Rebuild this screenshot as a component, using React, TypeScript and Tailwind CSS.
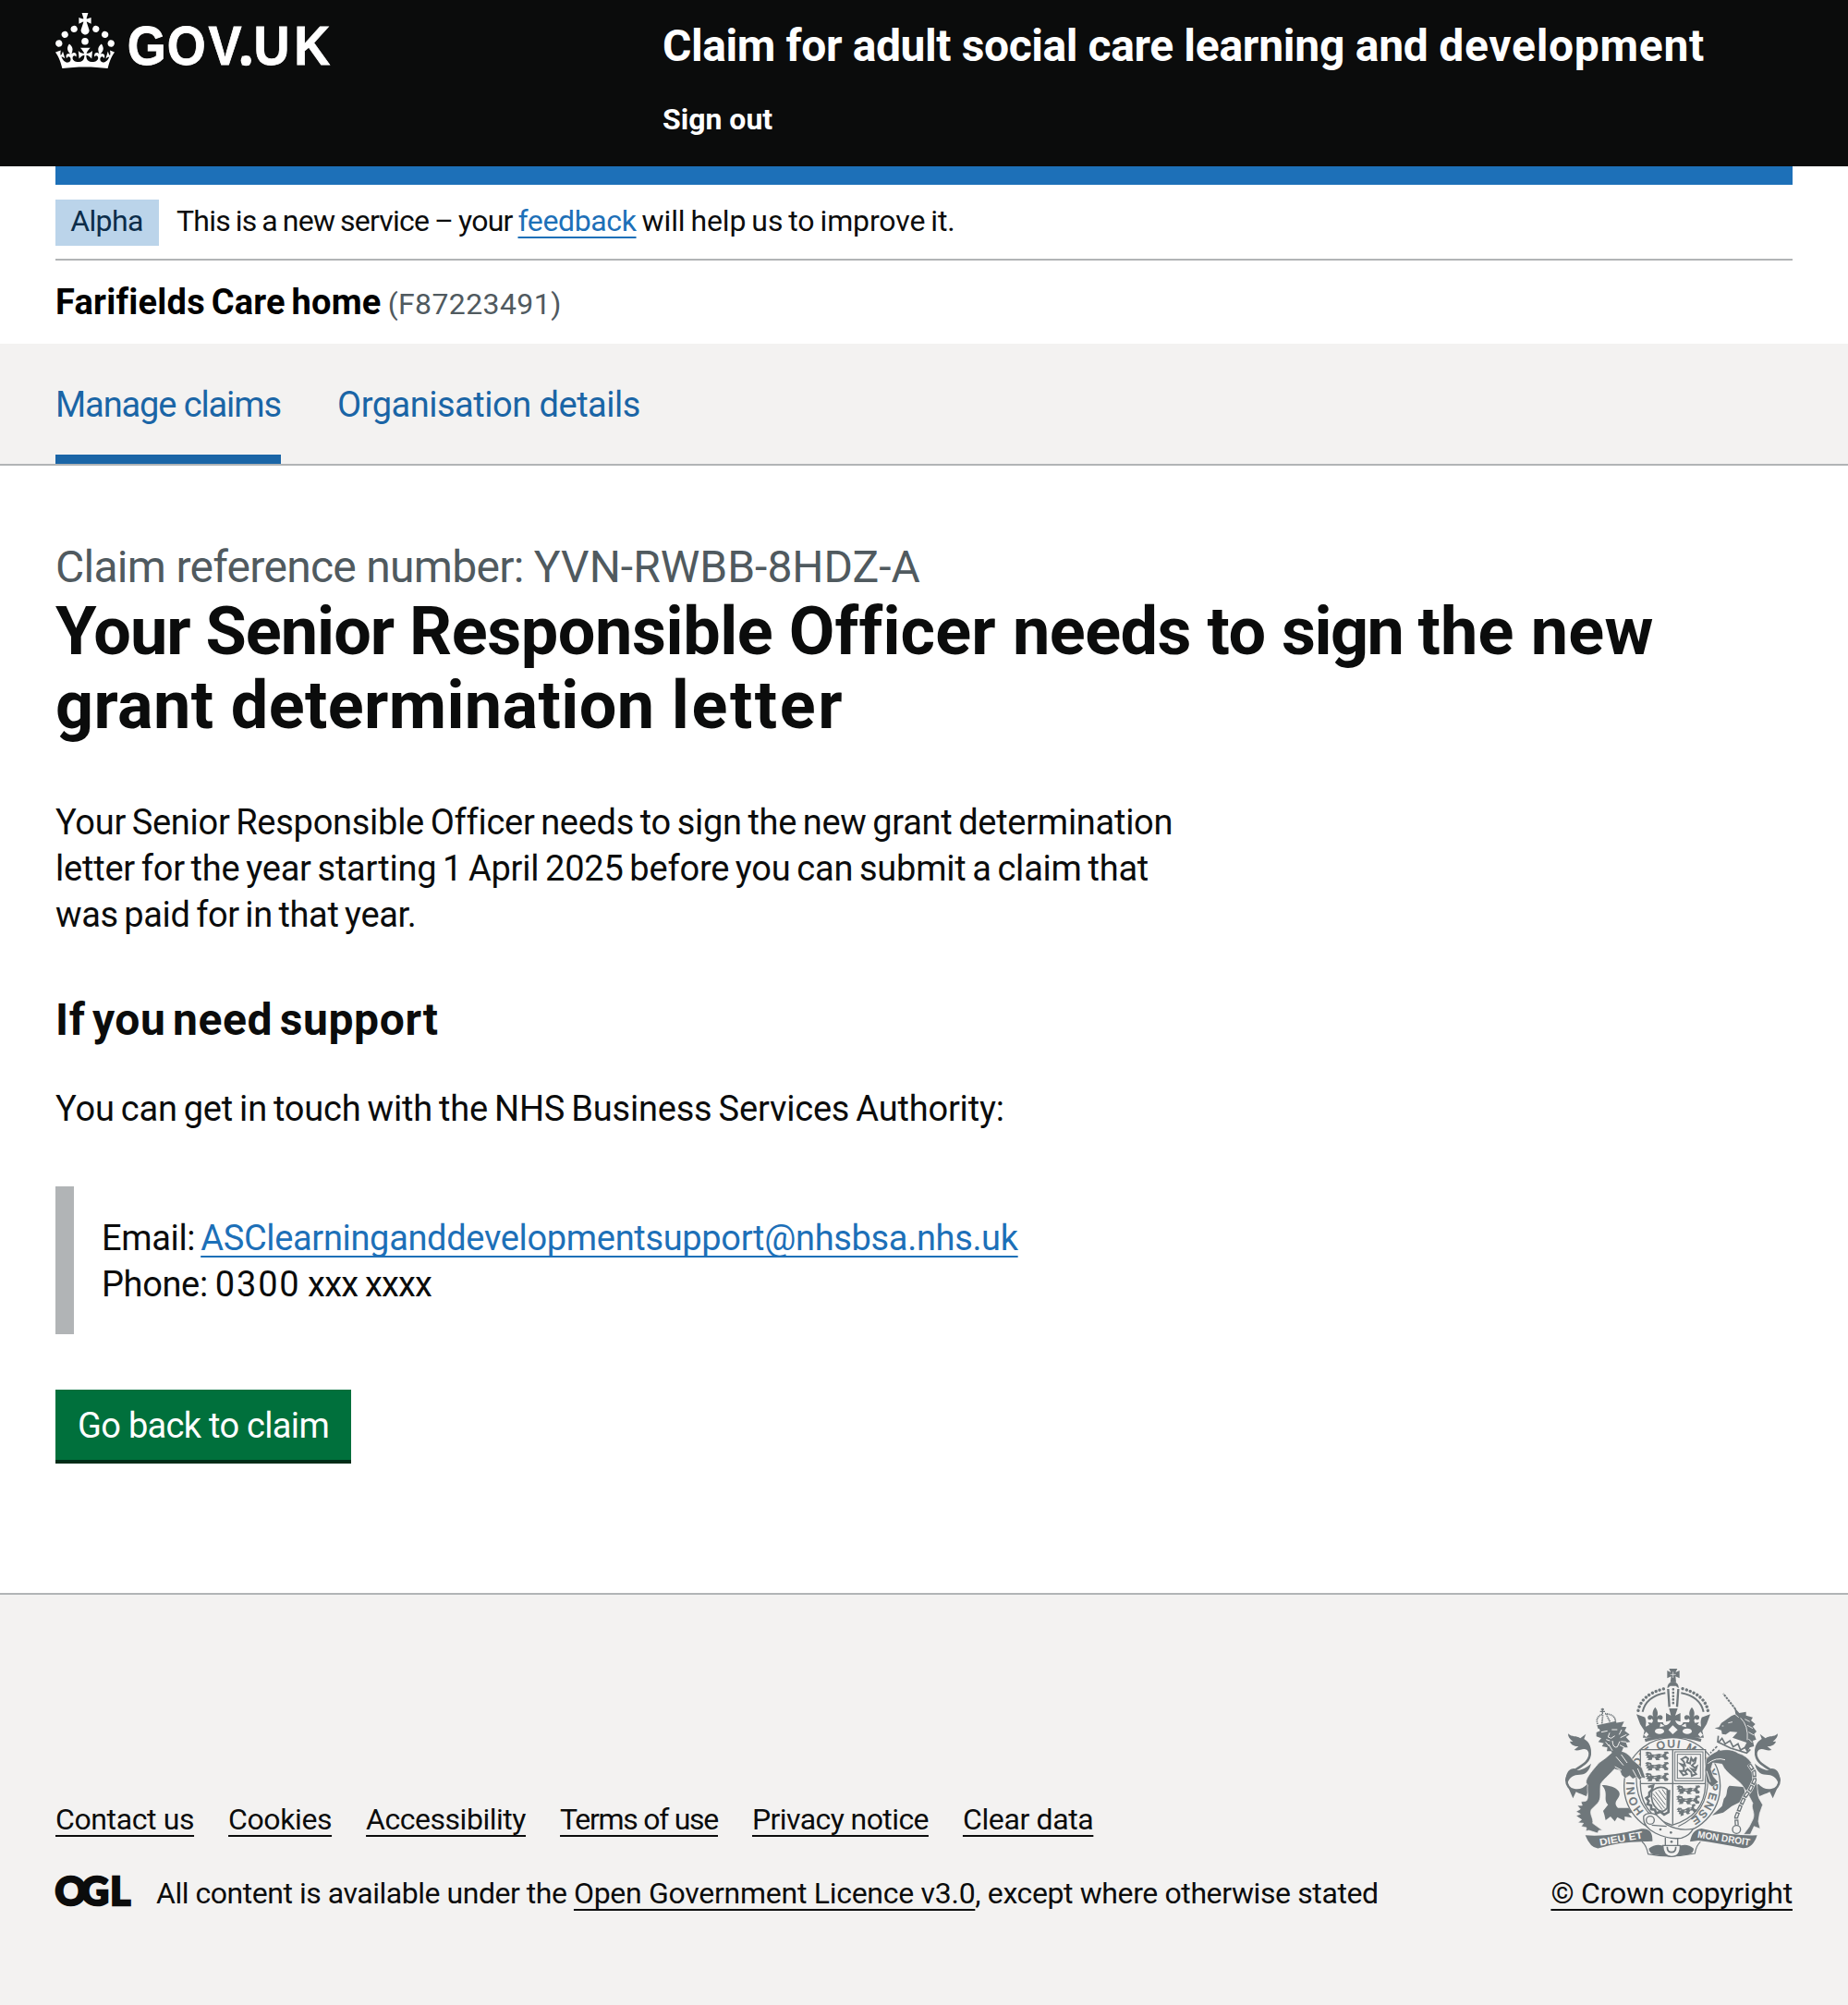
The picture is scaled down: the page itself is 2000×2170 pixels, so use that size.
import type { ReactNode } from 'react';

const CREST = '#6f777b';
const PAPER = '#f3f2f1';

function Crown() {
  return (
    <svg viewBox="0 0 32 30" className="h-[60px] w-16 shrink-0" fill="currentColor" aria-hidden="true">
      <path d="M22.6 10.4c-1 .4-2-.1-2.4-1-.4-.9.1-2 1-2.4.9-.4 2 .1 2.4 1s-.1 2-1 2.4m4.9 3c-1 .4-2-.1-2.4-1-.4-.9.1-2 1-2.4.9-.4 2 .1 2.4 1s0 2-1 2.4m3.3 4.8c-1 .4-2-.1-2.4-1-.4-.9.1-2 1-2.4.9-.4 2 .1 2.4 1s-.1 2-1 2.4M17 4.7l2.3 1.2V2.5l-2.3.7-.2-.2.9-3h-3.4l.9 3-.2.2c-.1.1-2.3-.7-2.3-.7v3.4L15 4.7c.1.1.1.2.2.2l-1.3 4c-.1.2-.1.4-.1.6 0 1.1.8 2 1.9 2.2h.7c1-.2 1.9-1.1 1.9-2.1 0-.2 0-.4-.1-.6l-1.3-4c-.1-.2 0-.2.1-.3m-7.6 5.7c.9.4 2-.1 2.4-1 .4-.9-.1-2-1-2.4-.9-.4-2 .1-2.4 1s0 2 1 2.4m-5 3c.9.4 2-.1 2.4-1 .4-.9-.1-2-1-2.4-.9-.4-2 .1-2.4 1s.1 2 1 2.4m-3.2 4.8c.9.4 2-.1 2.4-1 .4-.9-.1-2-1-2.4-.9-.4-2 .1-2.4 1s0 2 1 2.4m14.8 11c4.4 0 8.6.3 12.3.8 1.1-4.5 2.4-7 3.7-8.8l-2.5-.9c.2 1.3.3 1.9 0 2.7-.4-.4-.8-1.1-1.1-2.3l-1.2 4c.7-.5 1.3-.8 2-.9-1.1 2.5-2.6 3.1-3.5 3-1.1-.2-1.7-1.2-1.5-2.1.3-1.2 1.5-1.5 2.1-.1 1.1-2.3-.8-3-2-2.3 1.9-1.9 2.1-3.5.6-5.6-2.1 1.6-2.1 3.2-1.2 5.5-1.2-1.4-3.2-.6-2.5 1.6.9-1.4 2.1-.5 1.9.8-.2 1.1-1.7 2.1-3.5 1.9-2.7-.2-2.9-2.1-2.9-3.6.7-.1 1.9.5 2.9 1.9l.4-4.3c-1.1 1.1-2.1 1.4-3.2 1.4.4-1.2 2.1-3 2.1-3h-5.4s1.7 1.9 2.1 3c-1.1 0-2.1-.2-3.2-1.4l.4 4.3c1-1.4 2.2-2 2.9-1.9-.1 1.5-.2 3.4-2.9 3.6-1.9.2-3.4-.8-3.5-1.9-.2-1.3 1-2.2 1.9-.8.7-2.3-1.2-3-2.5-1.6.9-2.2.9-3.9-1.2-5.5-1.5 2-1.3 3.7.6 5.6-1.2-.7-3.1 0-2 2.3.6-1.4 1.8-1.1 2.1.1.2.9-.3 1.9-1.5 2.1-.9.2-2.4-.5-3.5-3 .6 0 1.2.3 2 .9l-1.2-4c-.3 1.1-.7 1.9-1.1 2.3-.3-.8-.2-1.4 0-2.7l-2.9.9C1.3 23 2.6 25.5 3.7 30c3.7-.5 7.9-.8 12.3-.8" />
      <circle cx="16" cy="15.4" r="1.9" />
    </svg>
  );
}

function Wordmark() {
  return (
    <svg viewBox="-4 -4 232 76" className="-mt-1 ml-[10px] h-[76px] w-[232px]" fill="currentColor" role="img" aria-label="GOV.UK">
      <text
        transform="scale(0.9 1)"
        x="-0.3 47.4 97.2 133.8 151.6 200.2"
        y="55.7"
        fontFamily="Liberation Sans"
        fontWeight="700"
        fontSize="60"
        stroke="currentColor"
        strokeWidth="0.8"
      >
        GOV.UK
      </text>
      <circle cx="128.3" cy="51.6" r="5.7" />
    </svg>
  );
}

/* One walking lion of the English quarterings. */
function Passant({ x, y }: { x: number; y: number }) {
  return (
    <g transform={`translate(${x} ${y})`}>
      <path d="M2 4L10 0L22 3L24 9L34 10L48 7L60 10L66 4L62 1L76 0L80 6L72 8L70 14L78 20L76 26L66 27L62 20L54 18L46 24L52 28L38 28L34 20L26 20L24 27L10 28L14 22L6 20L10 14L2 12L8 8Z" />
      <path d="M12 9h7M30 15h9M52 13h7" stroke={PAPER} strokeWidth="2.5" />
    </g>
  );
}

function Fleur({ x, y }: { x: number; y: number }) {
  return (
    <path
      transform={`translate(${x} ${y})`}
      d="M0 -29C10 -16 10 -6 5 4C12 -8 27 -4 24 7C22 13 14 13 11 8L7 14L10 22L24 20L20 34H-20L-24 20L-10 22L-7 14L-11 8C-14 13 -22 13 -24 7C-27 -4 -12 -8 -5 4C-10 -6 -10 -16 0 -29Z"
    />
  );
}

function Tail() {
  return (
    <>
      <path d="M178 455C150 485 107 475 107 440C110 402 184 400 183 352C182 334 172 324 158 320" fill="none" stroke={CREST} strokeWidth="8" />
      <path d="M112 289C126 302 138 294 152 304L170 290L164 306C182 316 190 336 186 360L174 342C160 332 150 348 132 342L146 330C128 330 120 322 118 314L128 315C117 306 112 300 112 289Z" />
      <path d="M104 440C106 412 118 400 136 402L130 408C152 410 168 402 187 386C182 408 170 422 150 422C130 422 116 432 111 448Z" />
      <path d="M112 462L128 499L138 478C150 484 162 488 172 492L182 456C160 474 134 478 112 462Z" />
    </>
  );
}

function RoyalArms() {
  return (
    <svg viewBox="100 75 702 618" className="h-[206px] w-[234px]" fill={CREST} aria-hidden="true">
      {/* garter */}
      <circle cx="450" cy="458" r="156" fill={PAPER} stroke={CREST} strokeWidth="4" />
      <path id="garter" d="M358 541A124 124 0 1 1 500 571" fill="none" />
      <text fontFamily="Liberation Sans" fontSize="35" stroke={CREST} strokeWidth="1.8">
        <textPath href="#garter" textLength="612">HONI SOIT QUI MAL Y PENSE</textPath>
      </text>
      <path d="M334 420Q328 545 440 590M566 420Q572 545 470 590" fill="none" stroke={CREST} strokeWidth="3.5" />

      {/* shield */}
      <path d="M347 341H558V455Q555 555 450 586Q350 555 347 455Z" fill={PAPER} stroke={CREST} strokeWidth="4" />
      <path d="M452 341V584M347 451H558" stroke={CREST} strokeWidth="4" />
      <Passant x={360} y={347} />
      <Passant x={360} y={381} />
      <Passant x={360} y={416} />
      <rect x="459" y="348" width="91" height="94" fill="none" stroke={CREST} strokeWidth="3" />
      <rect x="467" y="356" width="75" height="78" fill="none" stroke={CREST} strokeWidth="3" />
      <path
        d="M480 372L494 364L502 370L498 382L508 386L512 368L518 378L528 366L524 384L514 392L524 400L530 396L526 408L514 404L528 420L514 426L512 414L500 404L492 412L498 420L486 424L476 410L488 410L488 398L478 388L492 392L488 380Z"
        fill="none"
        stroke={CREST}
        strokeWidth="6"
      />
      <path d="M372 462L388 458L384 472L376 480L376 492L366 498L374 508L370 518L382 522L382 534L394 536L398 548L412 542L424 552L438 544L440 472" fill="none" stroke={CREST} strokeWidth="8" />
      <path d="M384 476Q410 454 434 470L434 530Q420 548 404 536Q378 516 384 476Z" fill={PAPER} stroke={CREST} strokeWidth="5" />
      <path d="M388 496l30 40M388 484l38 48M396 478l32 42M406 472l24 32M418 470l12 18" stroke={CREST} strokeWidth="3" />
      <Passant x={462} y={457} />
      <Passant x={461} y={490} />
      <g transform="translate(460 524) rotate(-14 0 0) scale(0.82 1)">
        <Passant x={0} y={8} />
      </g>

      {/* imperial crown */}
      <path d="M440 78H467L461 90L474 84V109L461 103L463 122H444L447 103L434 109V84L446 90Z" />
      <path d="M453 88v20M444 97h18" stroke={PAPER} strokeWidth="2" />
      <path d="M435 142C432 114 474 114 471 142L462 134H444Z" />
      <path d="M340 214Q350 162 424 143M566 214Q556 162 484 143" fill="none" stroke={CREST} strokeWidth="10" strokeLinecap="round" strokeDasharray="0.1 12.6" />
      <path d="M354 218Q366 168 428 157M552 218Q540 168 479 157" fill="none" stroke={CREST} strokeWidth="6" />
      <path d="M437 144L441 202M470 144L466 202" stroke={CREST} strokeWidth="7" />
      <path d="M453.5 145V200" stroke={CREST} strokeWidth="8" strokeLinecap="round" strokeDasharray="0.1 11" />
      <path d="M334 226L362 236L366 250C374 266 382 262 388 252H420C424 268 440 262 446 246L430 250V222L446 230L440 207H468L460 230L477 222V250L460 246C466 262 480 268 486 252H520C528 262 536 266 542 250L546 236L574 226L562 258L548 280L553 302H355L360 280L346 258Z" />
      <Fleur x={395} y={232} />
      <Fleur x={514} y={232} />
      <path d="M366 246l10 14l-12 6zM542 246l-10 14l12 6zM412 256l14 8l-16 4zM494 256l-14 8l16 4z" fill={PAPER} />
      <path d="M452 262L468 277L452 291L438 277Z" fill={PAPER} />
      <ellipse cx="409" cy="281" rx="15" ry="9" fill={PAPER} />
      <ellipse cx="499" cy="281" rx="15" ry="9" fill={PAPER} />
      <path d="M358 293l8 -10l8 9l-8 8zM550 293l-8 -10l-8 9l8 8z" fill={PAPER} />
      <path d="M362 311Q453 284 544 311" fill="none" stroke={CREST} strokeWidth="10" />

      {/* lion */}
      <Tail />
      <path
        d="M255 350C280 342 306 346 322 374L352 400L364 434L352 432L345 441L336 430L322 436L312 426L298 434L286 424L280 408L262 404C246 424 228 436 218 452C214 480 222 500 208 515L188 535C180 550 196 565 192 580L224 603L212 603L208 612L180 603L170 605L172 594L155 590L162 580L144 578L156 568L138 556L152 550L138 542L152 534L142 522L158 522L154 510L170 508C182 500 172 475 176 455C158 445 190 410 212 384Q236 368 255 350Z"
        stroke={PAPER}
        strokeWidth="2"
      />
      <path d="M268 364L292 392M284 356L304 384M322 406L334 428M338 402L350 430M264 396L286 408" fill="none" stroke={PAPER} strokeWidth="3" />
      <path d="M222 456C262 456 290 476 276 496C266 510 262 518 274 530L308 530L322 545L308 548L320 562L296 558L296 572L272 560L264 574L250 558L234 570L230 552L226 540L242 520C224 500 246 484 222 456Z" />
      <path d="M204 285L216 280L212 270L266 254L294 250L286 266L302 268L296 280L312 292L300 300L314 316L300 318L306 334L292 334L286 348L300 352L262 364L252 346L238 346L240 334L222 330L228 320L210 316L220 304L204 298Z" />
      <path d="M220 284L240 280M254 276L272 276M247 286L242 300L252 304L264 296M236 308L248 312M256 312Q258 338 272 332L280 314M286 276L278 292M302 292L282 302M302 316L284 314M296 334L280 326M234 316L246 330M244 324L256 344" fill="none" stroke={PAPER} strokeWidth="3" />
      <path d="M206 262L268 248L270 260L210 274Z" />
      <path d="M208 258Q200 234 224 226M266 248Q264 226 232 224M222 256L225 228M248 250L236 226" fill="none" stroke={CREST} strokeWidth="5" strokeDasharray="4 2" />
      <path d="M219 210h10M224 206v20M216 217h16" stroke={CREST} strokeWidth="4" />

      {/* unicorn */}
      <g transform="translate(905 0) scale(-1 1)">
        <Tail />
      </g>
      <path d="M656 210L616 159" stroke={CREST} strokeWidth="6" strokeDasharray="8 2.5" />
      <path d="M602 268L610 254L622 246L642 232L656 226L652 204L668 222L690 218L690 230L712 236L706 246L720 258L712 266L724 282L716 290L723 308L712 312L716 330L702 334L694 350L684 334L692 318L646 302L662 284L638 282L624 292L612 290L610 278L588 271Z" />
      <path d="M672 238Q698 262 694 310M686 242L702 250M694 262L712 272M698 284L716 294M698 306L710 318M632 254L646 251M612 264h5M652 224L666 236" fill="none" stroke={PAPER} strokeWidth="2.6" />
      <path d="M600 296L598 316L640 336L692 352L704 340M600 318L612 304L622 322L638 312L648 332L664 322L672 342L690 332" fill="none" stroke={CREST} strokeWidth="5" />
      <path
        d="M560 372C590 336 640 334 664 352C704 364 720 396 722 436C730 465 724 490 736 506L744 520L734 548L730 574L736 598L716 590L704 616L682 616L700 592L712 568C722 545 704 530 712 515L700 492L684 466C670 438 625 422 612 388L582 384L576 404L584 428L600 446L580 462L562 446L556 408Z"
        stroke={PAPER}
        strokeWidth="2"
      />
      <path d="M566 386Q592 364 622 374M562 410L574 446" fill="none" stroke={PAPER} strokeWidth="3" />
      <path d="M636 458C622 470 634 486 618 500L612 524L580 554L616 545L644 524L668 512C684 494 692 478 680 462Z" />
      <path d="M596 330L574 352M604 342L584 360" stroke={CREST} strokeWidth="5" strokeDasharray="9 4" />
      <path d="M700 388L716 412L718 440L704 470L686 494L672 524L658 560L660 586" fill="none" stroke={PAPER} strokeWidth="16" />
      <path d="M700 388L716 412L718 440L704 470L686 494L672 524L658 560L660 586" fill="none" stroke={CREST} strokeWidth="13" strokeDasharray="22 3" strokeLinejoin="round" />
      <path d="M700 388L716 412L718 440L704 470L686 494L672 524L658 560L660 586" fill="none" stroke={PAPER} strokeWidth="5" strokeDasharray="13 12" strokeDashoffset="-4" />
      <circle cx="659" cy="600" r="13" fill="none" stroke={CREST} strokeWidth="4" />

      {/* motto ribbon and buckle */}
      <path d="M168 619Q240 626 350 598Q388 594 386 638L352 640Q280 640 212 661Q186 664 168 619Z" />
      <path d="M726 619Q650 622 545 597Q514 600 508 640L535 636Q600 644 680 661Q712 662 726 619Z" />
      <path d="M352 640Q366 650 372 680Q446 694 524 678Q528 652 542 640" fill={PAPER} stroke={CREST} strokeWidth="3.5" />
      <path d="M374 662Q400 642 428 656L430 686L392 682Q376 678 374 662ZM520 662Q498 642 466 656L464 686L504 681Q520 676 520 662Z" />
      <text transform="translate(216 653) rotate(-10)" fontFamily="Liberation Sans" fontWeight="700" fontSize="33" fill={PAPER} textLength="142" lengthAdjust="spacingAndGlyphs">DIEU ET</text>
      <text transform="translate(531 626) rotate(9)" fontFamily="Liberation Sans" fontWeight="700" fontSize="32" fill={PAPER} textLength="172" lengthAdjust="spacingAndGlyphs">MON DROIT</text>
      <path d="M358 556Q370 542 398 552L432 584Q470 606 518 598Q508 620 480 628Q440 634 396 612Q352 590 358 556Z" fill={PAPER} stroke={CREST} strokeWidth="4" />
      <circle cx="379" cy="570" r="13" fill="none" stroke={CREST} strokeWidth="4" />
      <path d="M428 626V652M468 628V652M384 586L432 590" stroke={CREST} strokeWidth="4" />
      <path d="M420 652H476Q478 688 448 688Q420 688 420 652Z" fill={PAPER} stroke={CREST} strokeWidth="4" />
      <path d="M434 656Q434 674 448 674Q462 674 462 656" fill="none" stroke={CREST} strokeWidth="5" />
      <circle cx="412" cy="600" r="4" />
      <circle cx="446" cy="610" r="4" />
      <circle cx="448" cy="640" r="4" />
    </svg>
  );
}

function OglMark() {
  return (
    <svg viewBox="-2 -10 86 58" className="-mt-[10px] -ml-0.5 h-[58px] w-[86px] shrink-0" fill="#0b0c0c" role="img" aria-label="OGL">
      <text y="33.3" fontFamily="Lato" fontWeight="900" fontSize="42" stroke="#0b0c0c" strokeWidth="2.5" x="-0.5 27.5 59.3">
        OGL
      </text>
    </svg>
  );
}

function Link({ children, className }: { children: ReactNode; className: string }) {
  return (
    <a href="#" className={`underline decoration-2 underline-offset-[6px] [text-decoration-skip-ink:none] ${className}`}>
      {children}
    </a>
  );
}

export default function App() {
  return (
    <div className="flex min-h-[2170px] w-[2000px] flex-col bg-white font-[Roboto,sans-serif] text-[38px] leading-[50px] text-[#0b0c0c]">
      <header className="flex h-[180px] bg-[#0b0c0c] px-[60px] text-white">
        <div className="flex w-[657px] items-start pt-[14px]">
          <Crown />
          <Wordmark />
        </div>
        <div className="pt-5 font-bold">
          <div className="text-5xl leading-[60px] whitespace-pre">
            <span className="tracking-[-0.41px]">Claim for adult social care </span>
            <span className="tracking-[-0.25px]">learning and </span>
            <span className="tracking-[0.7px]">development</span>
          </div>
          <a href="#" className="mt-[29px] block text-[32px] leading-10">Sign out</a>
        </div>
      </header>

      <div className="mx-[60px] border-t-[20px] border-[#1d70b8]">
        <div className="flex h-[82px] border-b-2 border-[#b1b4b6] pt-4 text-[32px] leading-[46px]">
          <strong className="h-[50px] w-28 bg-[#bbd4ea] pr-px text-center font-normal tracking-[-0.6px] text-[#0c2d4a]">Alpha</strong>
          <p className="ml-[19px] whitespace-pre">
            <span className="tracking-[-0.78px] [word-spacing:-1.3px]">This is a new service – your </span>
            <Link className="tracking-[-0.38px] text-[#1d70b8]">feedback</Link>
            <span className="tracking-[-0.12px] [word-spacing:-1.8px]"> will help us to improve it.</span>
          </p>
        </div>
      </div>

      <div className="flex h-[90px] items-baseline px-[60px] pt-5">
        <span className="font-bold tracking-[0.23px] text-black [word-spacing:-3px]">Farifields Care home</span>
        <span className="ml-[7px] text-[32px] tracking-[0.4px] text-[#505a5f]">(F87223491)</span>
      </div>

      <nav className="flex h-[132px] gap-[61px] border-b-2 border-[#b1b4b6] bg-[#f3f2f1] px-[60px] text-[#1a65a6]">
        <a href="#" className="w-[244px] border-b-[10px] border-[#1a65a6] pt-[41px] whitespace-nowrap tracking-[-1.11px]">Manage claims</a>
        <a href="#" className="pt-[41px] tracking-[-0.49px]">Organisation details</a>
      </nav>

      <main className="flex h-[1220px] flex-col items-start px-[60px] pt-20">
        <span className="h-[59px] text-5xl leading-[60px] whitespace-pre text-[#505a5f]">
          <span className="tracking-[-0.72px]">Claim reference number: </span>YVN-RWBB-8HDZ-A
        </span>
        <h1 className="mt-px text-7xl leading-[80px] font-bold whitespace-pre">
          <span className="block tracking-[-0.48px]">
            <span className="tracking-[-1px]">Your Senior </span>
            <span className="tracking-[-0.43px]">Responsible </span>
            <span className="tracking-[0.15px]">Officer </span>
            needs to <span className="tracking-[-1.6px]">sign </span>
            <span className="tracking-[0.2px]">the new</span>
          </span>
          <span className="block tracking-[0.38px]">
            grant determination <span className="tracking-[2.6px]">letter</span>
          </span>
        </h1>
        <p className="mt-[61px] tracking-[-0.27px] [word-spacing:-2.5px]">
          Your Senior Responsible Officer needs to sign the new grant determination
          <br />
          <span className="tracking-[-0.21px]">letter for the year starting 1 April 2025 before you can submit a claim that</span>
          <br />
          <span className="tracking-[-0.36px]">was paid for in that year.</span>
        </p>
        <h2 className="mt-[59px] text-5xl leading-[60px] font-bold tracking-[0.6px] [word-spacing:-5px]">If you need support</h2>
        <p className="mt-[41px] tracking-[-0.19px] [word-spacing:-2.2px]">You can get in touch with the NHS Business Services Authority:</p>
        <div className="mt-[59px] border-l-[20px] border-[#b1b4b6] pt-[31px] pb-[29px] pl-[30px] tracking-[-0.36px]">
          <p className="[word-spacing:-3px]">
            Email: <Link className="tracking-[-0.33px] text-[#1d70b8]">ASClearninganddevelopmentsupport@nhsbsa.nhs.uk</Link>
          </p>
          <p className="whitespace-pre [word-spacing:-1px]">
            Phone: <span className="tracking-[1.8px]">0300</span>
            <span className="tracking-[-0.8px]"> xxx xxxx</span>
          </p>
        </div>
        <button className="mt-[60px] h-20 w-80 border-b-4 border-[#002d18] bg-[#00703c] pt-[2px] tracking-[-0.69px] whitespace-nowrap text-white">Go back to claim</button>
      </main>

      <footer className="flex flex-1 justify-between border-t-2 border-[#b1b4b6] bg-[#f3f2f1] px-[60px] text-[32px] leading-10">
        <div className="pt-[223px]">
          <div className="flex gap-[37px]">
            <Link className="tracking-[-0.39px]">Contact us</Link>
            <Link className="tracking-[-0.4px]">Cookies</Link>
            <Link className="tracking-[-0.47px]">Accessibility</Link>
            <Link className="tracking-[-1.28px]">Terms of use</Link>
            <Link className="tracking-[-0.59px]">Privacy notice</Link>
            <Link className="tracking-[-0.37px]">Clear data</Link>
          </div>
          <div className="mt-10 flex items-start">
            <OglMark />
            <p className="ml-[25px] whitespace-pre">
              <span className="tracking-[-0.47px]">All content is available under the </span>
              <Link className="tracking-[-0.28px]">Open Government Licence v3.0</Link>
              <span className="tracking-[-0.39px]">, except where otherwise stated</span>
            </p>
          </div>
        </div>
        <div className="flex flex-col items-end pt-[79px]">
          <div className="mr-[13px]">
            <RoyalArms />
          </div>
          <Link className="mt-[18px] tracking-[-0.2px]">© Crown copyright</Link>
        </div>
      </footer>
    </div>
  );
}
